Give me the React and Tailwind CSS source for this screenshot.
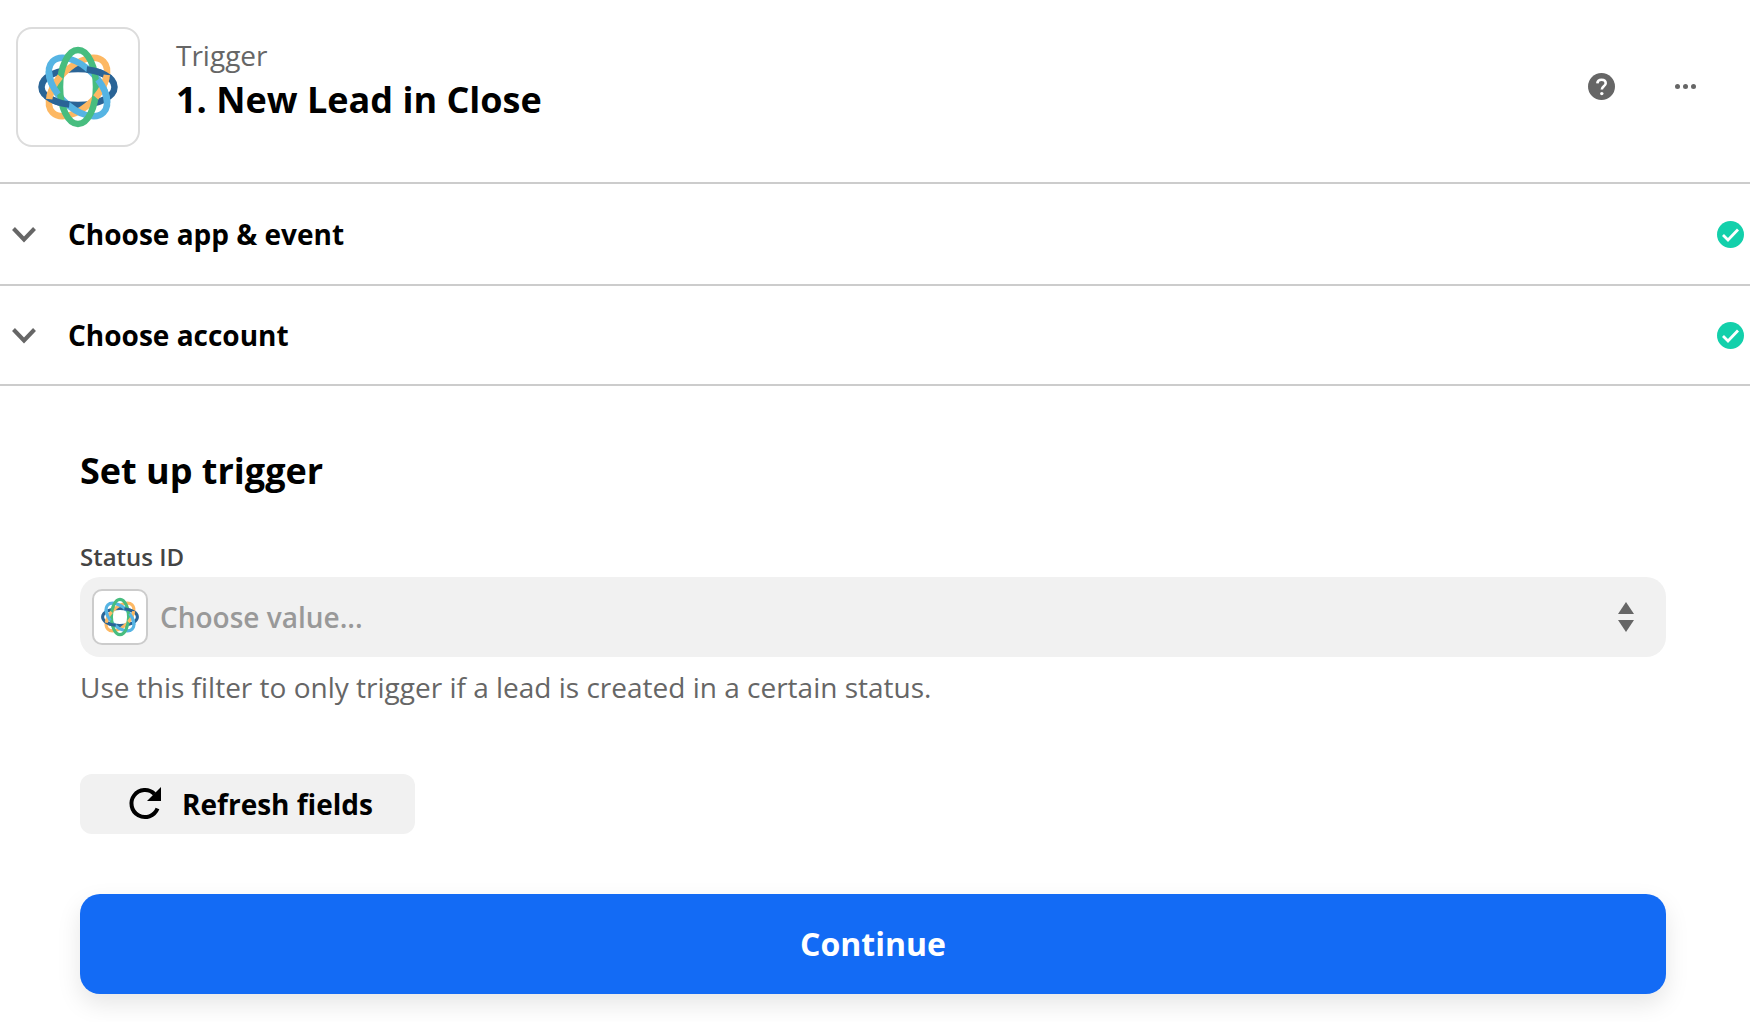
// App.jsx
function CloseLogo({ size }) {
    return (
        <svg width={size} height={size} viewBox="0 0 84 84" fill="none" strokeWidth="6.5">
            <g transform="translate(42 42)">
                <ellipse rx="36.5" ry="18" stroke="#2a6496" />
                <ellipse rx="36" ry="20" transform="rotate(-45)" stroke="#fdb863" />
                <ellipse rx="36" ry="20" transform="rotate(45)" stroke="#56b4e3" />
                <ellipse rx="37" ry="18" transform="rotate(90)" stroke="#47bd7f" />
                {/* woven parts that go back over the others */}
                <ellipse rx="36.5" ry="18" stroke="#2a6496" pathLength="100" strokeDasharray="14 36" strokeDashoffset="-30" />
                <ellipse rx="36" ry="20" transform="rotate(-45)" stroke="#fdb863" pathLength="100" strokeDasharray="14 36" strokeDashoffset="-8" />
                <ellipse rx="36" ry="20" transform="rotate(45)" stroke="#56b4e3" pathLength="100" strokeDasharray="14 36" strokeDashoffset="-30" />
            </g>
        </svg>
    );
}

function CheckBadge() {
    return (
        <svg width="27" height="27" viewBox="0 0 27 27">
            <circle cx="13.5" cy="13.5" r="13.5" fill="#13d0ab" />
            <path d="M6 14l5 5L21 8.5" fill="none" stroke="#fff" strokeWidth="2.8" />
        </svg>
    );
}

function Chevron() {
    return (
        <svg width="24" height="16" viewBox="0 0 24 16" className="mt-[2px]">
            <path d="M1.5 1.5L12 12.5L22.5 1.5" fill="none" stroke="#666" strokeWidth="4" />
        </svg>
    );
}

function SectionRow({ title, height }) {
    return (
        <div className={`flex items-center border-b-2 border-[#ccc] pl-3 pr-[6px] ${height}`}>
            <Chevron />
            <span className="ml-[32px] flex-1 text-[28px] font-bold text-black">{title}</span>
            <CheckBadge />
        </div>
    );
}

export default function App() {
    return (
        <div className="min-h-[1022px] overflow-hidden bg-white font-['Open_Sans',sans-serif]">
            {/* header */}
            <div className="flex h-[184px] items-center border-b-2 border-[#ccc] pb-[9px] pl-[16px] pr-[54px]">
                <div className="flex h-[120px] w-[124px] items-center justify-center rounded-[16px] border-2 border-[#dcdcdc]">
                    <CloseLogo size={84} />
                </div>
                <div className="mb-[12px] ml-[36px] flex-1">
                    <div className="text-[28px] leading-[36px] text-[#666]">Trigger</div>
                    <div className="mt-[3px] text-[36px] leading-[48px] font-bold text-black">1. New Lead in Close</div>
                </div>
                <svg width="27" height="27" viewBox="0 0 27 27">
                    <circle cx="13.5" cy="13.5" r="13.5" fill="#666" />
                    <path d="M9.3 10.4c.2-2.3 1.9-3.6 4.2-3.6 2.4 0 4.2 1.4 4.2 3.5 0 3-3.9 3-3.9 6.2" fill="none" stroke="#fff" strokeWidth="2.6" />
                    <circle cx="13.8" cy="20.6" r="1.7" fill="#fff" />
                </svg>
                <div className="ml-[60px] flex gap-[2.5px]">
                    <span className="size-[5.5px] rounded-full bg-[#666]" />
                    <span className="size-[5.5px] rounded-full bg-[#666]" />
                    <span className="size-[5.5px] rounded-full bg-[#666]" />
                </div>
            </div>

            <SectionRow title="Choose app & event" height="h-[102px]" />
            <SectionRow title="Choose account" height="h-[100px]" />

            {/* form */}
            <div className="pl-[80px] pr-[84px]">
                <h2 className="mt-[60px] text-[36px] leading-[50px] font-bold text-black">Set up trigger</h2>
                <label className="mt-[45px] block text-[24px] leading-[32px] font-semibold text-[#444]">Status ID</label>
                <div className="mt-[4px] flex h-[80px] items-center rounded-[20px] bg-[#f1f1f1] pl-3 pr-8">
                    <div className="flex size-[56px] items-center justify-center rounded-[10px] border-2 border-[#ccc] bg-white">
                        <CloseLogo size={40} />
                    </div>
                    <span className="ml-3 flex-1 text-[28px] font-semibold text-[#999]">Choose value...</span>
                    <svg width="16" height="30" viewBox="0 0 16 30" fill="#666">
                        <path d="M8 0L16 12H0z" />
                        <path d="M0 18H16L8 30z" />
                    </svg>
                </div>
                <p className="mt-[11px] text-[28px] leading-[38px] text-[#666]">Use this filter to only trigger if a lead is created in a certain status.</p>

                <button className="mt-[68px] flex h-[60px] w-[335px] items-center justify-center gap-[20px] rounded-[12px] bg-[#f1f1f1]">
                    <svg width="34" height="34" viewBox="0 0 34 34" className="ml-[6px]">
                        <path d="M29.5 21.5A13.5 13.5 0 1 1 26.5 7" fill="none" stroke="#000" strokeWidth="4" />
                        <path d="M33 0V14H19z" fill="#000" />
                    </svg>
                    <span className="text-[28px] font-bold text-black">Refresh fields</span>
                </button>

                <button className="mt-[60px] flex h-[100px] w-full items-center justify-center rounded-[20px] bg-[#136bf5] text-[32px] font-bold text-white shadow-[0_10px_24px_rgba(0,0,0,0.1)]">
                    Continue
                </button>
            </div>
        </div>
    );
}
